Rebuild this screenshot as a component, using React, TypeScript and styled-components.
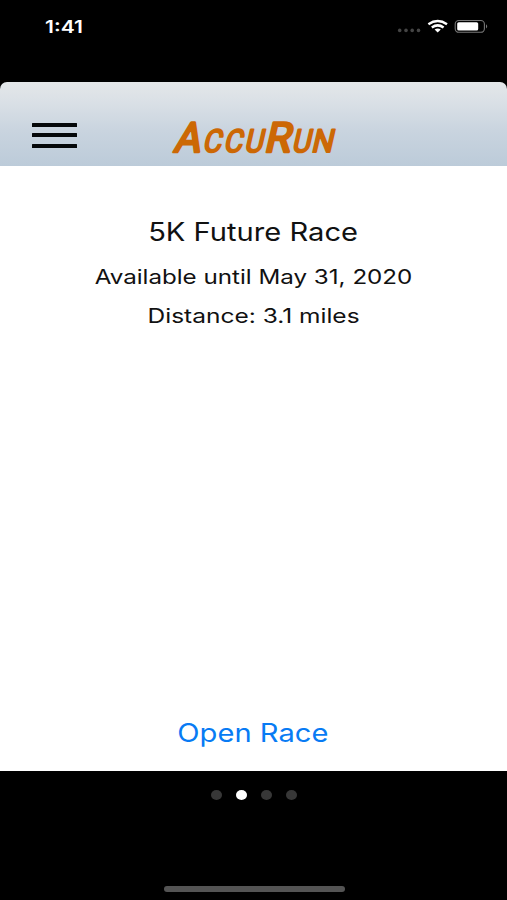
import React from "react";
import styled, { createGlobalStyle } from "styled-components";

const GlobalStyle = createGlobalStyle`
  * { box-sizing: border-box; }
  body { margin: 0; background: #000; }
`;

const Screen = styled.main`
  width: 507px;
  height: 900px;
  display: flex;
  flex-direction: column;
  overflow: hidden;
  background: #000;
  font-family: Inter, "Liberation Sans", sans-serif;
`;

const StatusBar = styled.div`
  height: 82px;
  flex: none;
  display: flex;
  justify-content: space-between;
  align-items: flex-start;
  padding: 14px 17px 0 45px;
  color: #fff;
`;

const Stretched = styled.span<{ $x: number; $origin?: string }>`
  display: inline-block;
  white-space: nowrap;
  transform: scaleX(${(p) => p.$x});
  transform-origin: ${(p) => p.$origin ?? "center"};
`;

const Clock = styled.div`
  font-size: 17px;
  font-weight: 600;
  line-height: 26px;
`;

const Header = styled.header`
  height: 84px;
  flex: none;
  display: flex;
  align-items: flex-start;
  padding: 34px 0 0 32px;
  gap: 93px;
  border-radius: 7px 7px 0 0;
  background: linear-gradient(#e4e7e9 0%, #dae0e6 24%, #c9d4df 58%, #bccbd9 100%);
`;

const MenuButton = styled.button`
  width: 45px;
  height: 34px;
  padding: 7px 0 0;
  border: 0;
  background: none;
  display: flex;
  flex-direction: column;
  gap: 6.3px;
`;

const MenuLine = styled.span`
  height: 4px;
  flex: none;
  border-radius: 0.5px;
  background: #05080a;
`;

const Card = styled.section`
  height: 605px;
  flex: none;
  display: flex;
  flex-direction: column;
  align-items: center;
  padding-top: 46px;
  background: #fff;
  color: #111;
`;

const Title = styled.h1`
  margin: 0 0 6px;
  font-size: 25px;
  font-weight: 400;
  line-height: 40px;
`;

const Detail = styled.p`
  margin: 0;
  font-size: 20px;
  line-height: 39px;
`;

const OpenButton = styled.button`
  margin: auto 0 18px;
  padding: 0 1px 0 0;
  border: 0;
  background: none;
  color: #087bf4;
  font: 400 25px/40px Inter, "Liberation Sans", sans-serif;
`;

const Footer = styled.footer`
  flex: 1;
  display: flex;
  flex-direction: column;
  align-items: center;
  justify-content: space-between;
  padding: 19px 0 8.5px 1px;
`;

const Pager = styled.div`
  display: flex;
  gap: 14.3px;
`;

const Dot = styled.span<{ $active?: boolean }>`
  width: 11px;
  height: 10px;
  border-radius: 50%;
  background: ${(p) => (p.$active ? "#fff" : "#373737")};
`;

const HomeIndicator = styled.div`
  width: 181px;
  height: 6px;
  border-radius: 3px;
  background: #545454;
`;

const StatusIcons = () => (
  <svg width="93" height="24" viewBox="397 14 93 24" aria-label="Wi-Fi and battery">
    {[399.7, 406, 412.2, 418.5].map((x) => (
      <circle key={x} cx={x} cy="30.4" r="1.8" fill="#454545" />
    ))}
    <g fill="none" stroke="#fff" strokeWidth="2.5">
      <path d="M428.4 24.2Q437.7 18 447 24.2" />
      <path d="M431.8 27.5Q437.7 23.3 443.6 27.5" />
    </g>
    <path d="M434.6 29.6Q437.7 27.6 440.8 29.6L437.7 32.5Z" fill="#fff" />
    <rect x="455.2" y="20.5" width="29.2" height="11.8" rx="3.6" fill="none" stroke="#777" strokeWidth="1.1" />
    <rect x="457.2" y="22.2" width="21" height="8.4" rx="1.6" fill="#fff" />
    <path d="M486 24.2Q488.4 26.4 486 28.6Z" fill="#777" />
  </svg>
);

const letters = [
  { c: "A", x: 173, w: 26.5, big: true },
  { c: "C", x: 202, w: 18.5, big: false },
  { c: "C", x: 223, w: 18.5, big: false },
  { c: "U", x: 243.7, w: 18.5, big: false },
  { c: "R", x: 263.5, w: 26, big: true },
  { c: "U", x: 291.3, w: 18.5, big: false },
  { c: "N", x: 310.7, w: 21.5, big: false },
];

const LogoDrawing = styled.svg`
  overflow: visible;
`;

const Logo = () => (
  <LogoDrawing width="170" height="50" viewBox="170 116 170 50" role="img" aria-label="AccuRun">
    <g transform="translate(0 151.8) skewX(-13)" fill="#cc6805" stroke="#cc6805" strokeLinejoin="round" fontFamily="Roboto, sans-serif" fontWeight="400">
      {letters.map((l) => (
        <text key={l.x} x={l.x} y="0" fontSize={l.big ? 41.5 : 31.5} strokeWidth={l.big ? 2.6 : 2} textLength={l.w} lengthAdjust="spacingAndGlyphs">
          {l.c}
        </text>
      ))}
    </g>
  </LogoDrawing>
);

export default function App() {
  return (
    <Screen>
      <GlobalStyle />
      <StatusBar>
        <Clock><Stretched $x={1.24} $origin="left">1:41</Stretched></Clock>
        <StatusIcons />
      </StatusBar>
      <Header>
        <MenuButton aria-label="Menu">
          <MenuLine /><MenuLine /><MenuLine />
        </MenuButton>
        <Logo />
      </Header>
      <Card>
        <Title><Stretched $x={1.165}>5K Future Race</Stretched></Title>
        <Detail><Stretched $x={1.208}>Available until May 31, 2020</Stretched></Detail>
        <Detail><Stretched $x={1.225}>Distance: 3.1 miles</Stretched></Detail>
        <OpenButton><Stretched $x={1.165}>Open Race</Stretched></OpenButton>
      </Card>
      <Footer>
        <Pager><Dot /><Dot $active /><Dot /><Dot /></Pager>
        <HomeIndicator />
      </Footer>
    </Screen>
  );
}
